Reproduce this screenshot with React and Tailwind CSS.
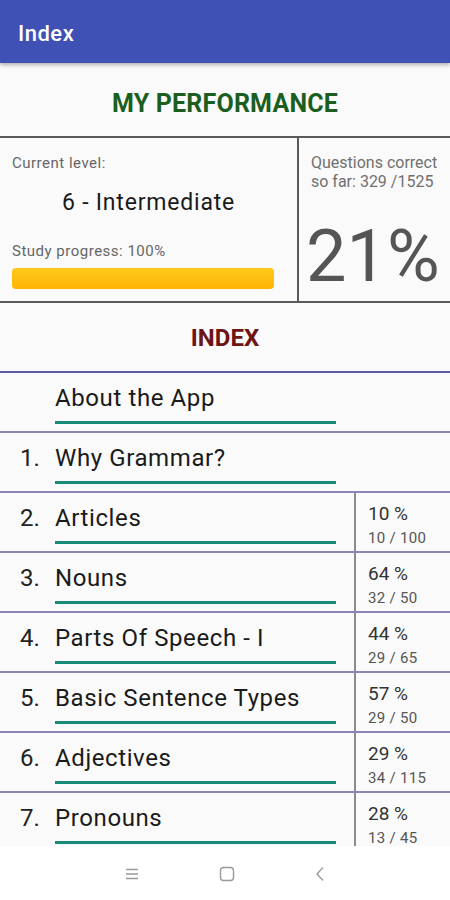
import React from "react"

const rows = [
  { n: "", title: "About the App" },
  { n: "1.", title: "Why Grammar?" },
  { n: "2.", title: "Articles", pct: "10 %", score: "10 / 100" },
  { n: "3.", title: "Nouns", pct: "64 %", score: "32 / 50" },
  { n: "4.", title: "Parts Of Speech - I", pct: "44 %", score: "29 / 65" },
  { n: "5.", title: "Basic Sentence Types", pct: "57 %", score: "29 / 50" },
  { n: "6.", title: "Adjectives", pct: "29 %", score: "34 / 115" },
  { n: "7.", title: "Pronouns", pct: "28 %", score: "13 / 45" },
]

function IndexRow({ n, title, pct, score }) {
  return (
    <div className="flex h-[60px] shrink-0 border-b-2 border-[#8a85ba]">
      <div className="flex flex-1 min-w-0">
        <div className="w-[55px] shrink-0 pl-[20px] pt-[11px] text-[24px] leading-[28px] text-[#222]">
          {n}
        </div>
        <div className="flex flex-col pt-[11px]">
          <div className="text-[24px] leading-[28px] tracking-[0.6px] text-[#1a1a1a] whitespace-nowrap">{title}</div>
          <div className="mt-[9px] h-[3px] w-[281px] bg-[#178a7a]" />
        </div>
      </div>
      {pct && (
        <div className="w-[96px] shrink-0 border-l-2 border-[#8c8c8c] pl-[12px] pt-[9px]">
          <div className="text-[19px] leading-[24px] text-[#333]">{pct}</div>
          <div className="mt-[2px] text-[15px] leading-[20px] tracking-[0.3px] text-[#555]">{score}</div>
        </div>
      )}
    </div>
  )
}

export default function App() {
  return (
    <div
      className="flex h-[900px] w-[450px] flex-col overflow-hidden bg-[#fafafa]"
      style={{ fontFamily: "Roboto, 'Noto Sans', Arial, sans-serif" }}
    >
      {/* APP BAR */}
      <div className="relative z-10 h-[63px] shrink-0 bg-[#3f51b5] pl-[18px] pt-[21px] shadow-[0_2px_4px_rgba(0,0,0,0.3)]">
        <div className="text-[22px] font-medium leading-[26px] tracking-[0.5px] text-white">Index</div>
      </div>

      {/* SCROLL CONTENT */}
      <div className="flex flex-1 flex-col overflow-hidden">
        <div className="h-[75px] shrink-0 border-b-2 border-[#5a5a5a] pt-[27px] text-center">
          <span className="text-[25px] font-bold leading-[28px] tracking-[0.2px] text-[#1b5e20]">MY PERFORMANCE</span>
        </div>

        {/* STATS */}
        <div className="flex h-[165px] shrink-0 border-b-2 border-[#5a5a5a]">
          <div className="w-[299px] shrink-0 border-r-2 border-[#5a5a5a] pl-[12px] pt-[15px]">
            <div className="text-[15px] leading-[20px] tracking-[0.5px] text-[#666]">Current level:</div>
            <div className="mt-[16px] pr-[12px] text-center text-[23px] leading-[28px] tracking-[0.8px] text-[#1a1a1a]">
              6 - Intermediate
            </div>
            <div className="mt-[24px] text-[15px] leading-[20px] tracking-[0.5px] text-[#666]">Study progress: 100%</div>
            <div className="mt-[7px] h-[21px] w-[262px] rounded-[4px] bg-gradient-to-b from-[#ffc81a] to-[#ffb300]" />
          </div>
          <div className="flex-1 pl-[12px] pt-[15px]">
            <div className="text-[16px] leading-[19px] text-[#707070]">
              Questions correct
              <br />
              so far: 329 /1525
            </div>
            <div className="mt-[30px] -ml-[5px] text-[72px] leading-[72px] text-[#555]">21%</div>
          </div>
        </div>

        <div className="h-[70px] shrink-0 border-b-2 border-[#5f5a9e] pt-[21px] text-center">
          <span className="text-[24px] font-bold leading-[28px] text-[#6d1414]">INDEX</span>
        </div>

        {rows.map((r) => (
          <IndexRow key={r.title} {...r} />
        ))}
      </div>

      {/* NAV BAR */}
      <div className="flex h-[54px] shrink-0 items-center bg-white">
        <div className="flex w-full items-center justify-center gap-[80px] pt-[2px]">
          <svg width="14" height="12" viewBox="0 0 14 12" className="text-[#9a9a9a]">
            <path d="M1 1.5h12M1 6h12M1 10.5h12" stroke="currentColor" strokeWidth="1.3" />
          </svg>
          <svg width="16" height="16" viewBox="0 0 16 16" className="text-[#9a9a9a]">
            <rect x="1.5" y="1.5" width="13" height="13" rx="3" fill="none" stroke="currentColor" strokeWidth="1.4" />
          </svg>
          <svg width="10" height="16" viewBox="0 0 10 16" className="text-[#9a9a9a]">
            <path d="M8 1.5L2 8l6 6.5" fill="none" stroke="currentColor" strokeWidth="1.4" />
          </svg>
        </div>
      </div>
    </div>
  )
}
